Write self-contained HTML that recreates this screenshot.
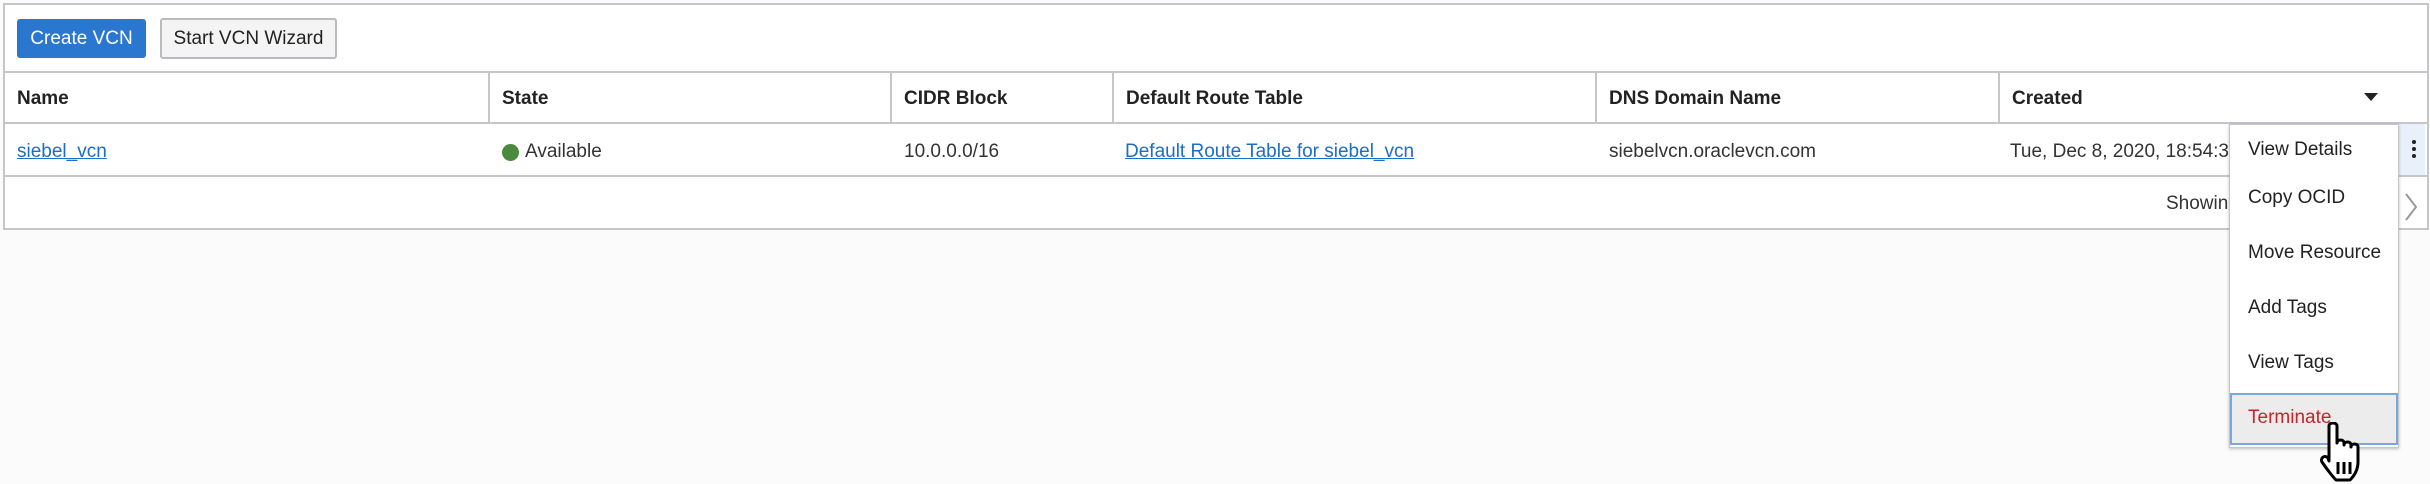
<!DOCTYPE html>
<html><head><style>
body{margin:0;width:2430px;height:484px;background:#fbfbfb;font-family:"Liberation Sans",sans-serif;color:#222;position:relative;overflow:hidden}
.a{position:absolute}
.box{left:3px;top:3px;width:2422px;height:223px;border:2px solid #c4c6ca;background:#fff}
.btn{top:19px;height:39px;border-radius:3px;font-size:19px;line-height:39px;text-align:center}
.hl{height:2px;background:#c4c6ca;left:3px;width:2424px}
.vl{width:2px;background:#c4c6ca;top:72px;height:51px}
.th{top:88px;font-size:19px;font-weight:bold;color:#222}
.td{top:141px;font-size:19px;color:#333}
a{color:#1c6dc4;text-decoration:underline}
.mi{left:2248px;font-size:19px;color:#222}
</style></head><body>
<div class="a box"></div>
<div class="a btn" style="left:17px;width:129px;background:#2a77d0;color:#fff">Create VCN</div>
<div class="a btn" style="left:160px;width:173px;background:#f4f4f4;border:2px solid #b9bbbe;height:37px;line-height:37px;top:18px">Start VCN Wizard</div>
<div class="a hl" style="top:71px"></div>
<div class="a hl" style="top:122px"></div>
<div class="a hl" style="top:175px"></div>
<div class="a vl" style="left:488px"></div>
<div class="a vl" style="left:890px"></div>
<div class="a vl" style="left:1112px"></div>
<div class="a vl" style="left:1595px"></div>
<div class="a vl" style="left:1998px"></div>
<div class="a th" style="left:17px">Name</div>
<div class="a th" style="left:502px">State</div>
<div class="a th" style="left:904px">CIDR Block</div>
<div class="a th" style="left:1126px">Default Route Table</div>
<div class="a th" style="left:1609px">DNS Domain Name</div>
<div class="a th" style="left:2012px">Created</div>
<svg class="a" style="left:2364px;top:93px" width="14" height="9"><path d="M0 0H14L7 8Z" fill="#222"/></svg>
<div class="a td" style="left:17px"><a>siebel_vcn</a></div>
<div class="a" style="left:502px;top:144px;width:17px;height:17px;border-radius:50%;background:#4a8a3e"></div>
<div class="a td" style="left:525px">Available</div>
<div class="a td" style="left:904px">10.0.0.0/16</div>
<div class="a td" style="left:1125px"><a>Default Route Table for siebel_vcn</a></div>
<div class="a td" style="left:1609px">siebelvcn.oraclevcn.com</div>
<div class="a td" style="left:2010px">Tue, Dec 8, 2020, 18:54:32</div>
<div class="a td" style="left:2166px;top:193px">Showing</div>
<div class="a" style="left:2399px;top:124px;width:26px;height:51px;background:#e8f1fb"></div>
<div class="a" style="left:2412px;top:140px;width:4px;height:4px;border-radius:50%;background:#222;box-shadow:0 7px 0 #222,0 14px 0 #222"></div>
<svg class="a" style="left:2403px;top:192px" width="16" height="30"><path d="M3 2L13 15L3 28" stroke="#999" stroke-width="2" fill="none"/></svg>
<div class="a" style="left:2229px;top:124px;width:168px;height:322px;background:#fff;border:1px solid #c4c6ca;box-shadow:0 1px 3px rgba(0,0,0,.25)"></div>
<div class="a mi" style="top:139px">View Details</div>
<div class="a mi" style="top:187px">Copy OCID</div>
<div class="a mi" style="top:242px">Move Resource</div>
<div class="a mi" style="top:297px">Add Tags</div>
<div class="a mi" style="top:352px">View Tags</div>
<div class="a" style="left:2230px;top:393px;width:164px;height:48px;background:#ececec;border:2px solid #7aa7e0"></div>
<div class="a mi" style="top:407px;color:#c0262d">Terminate</div>
<svg class="a" style="left:2318px;top:422px" width="50" height="62" viewBox="0 0 50 62">
<path d="M11 4c0-4 8-4 8 0v17c0-4 7-4 7 0v2c0-4 7-4 7 0v2c0-4 7-4 7 0v15c0 8-4 14-8 18H18c-3-3-10-12-14-18-2-3 2-8 6-4l1 3Z" fill="#fff" stroke="#000" stroke-width="3" stroke-linejoin="round"/>
<path d="M20 40v12M26 40v12M32 40v12" stroke="#000" stroke-width="3"/>
</svg>
</body></html>
